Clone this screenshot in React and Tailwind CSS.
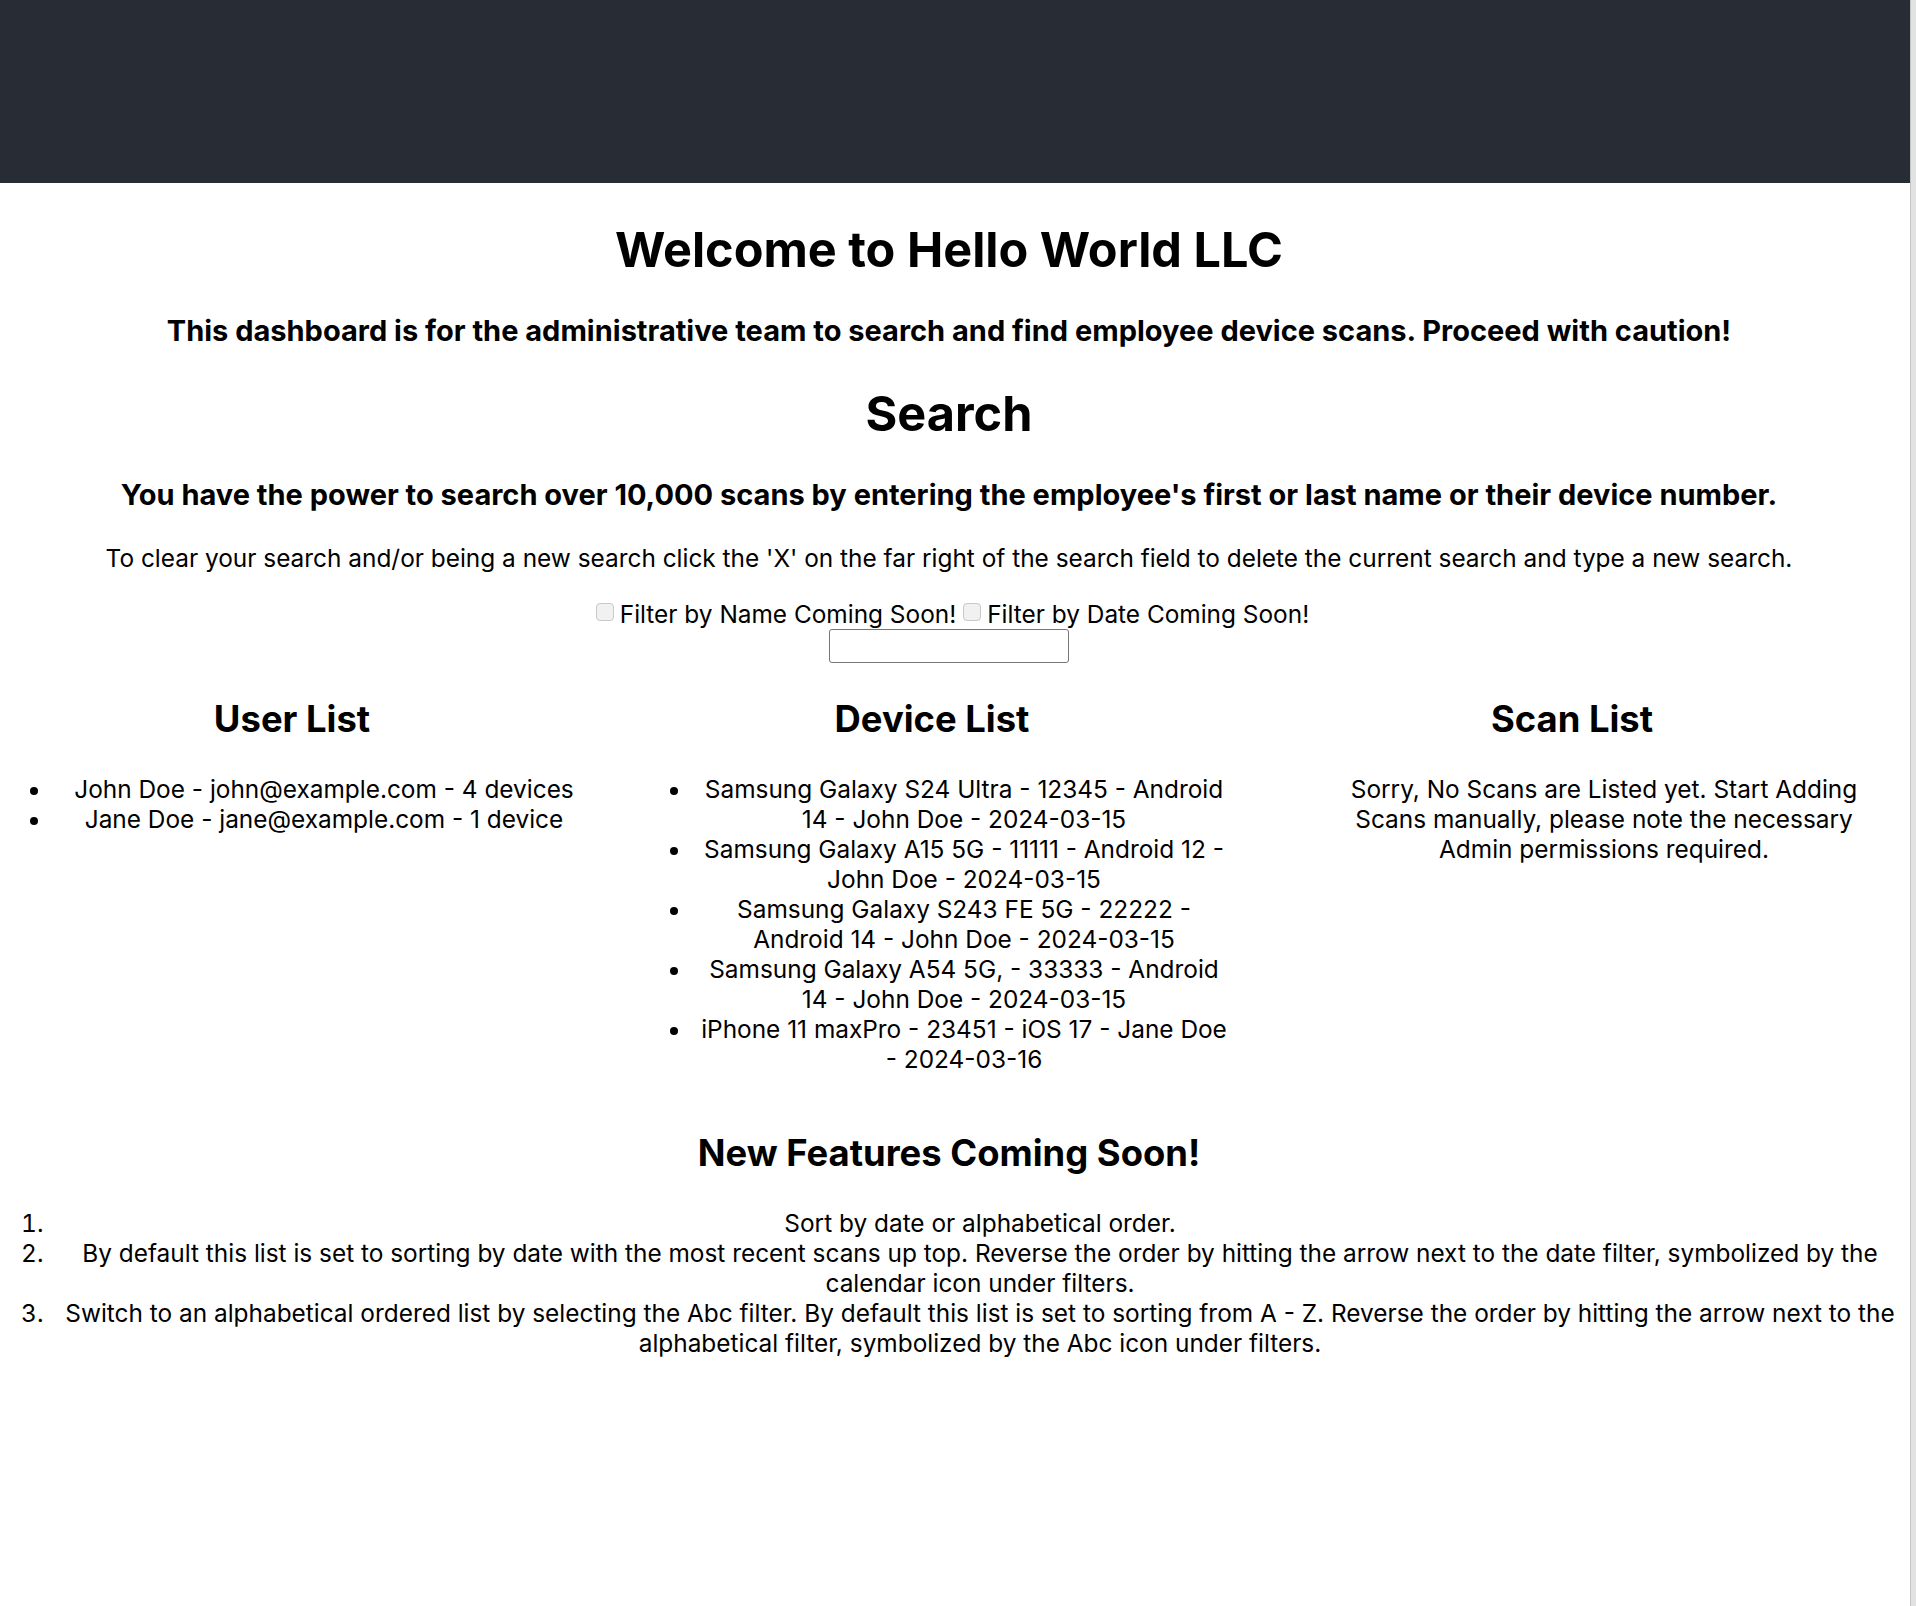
import React from "react";

const users = [
  "John Doe - john@example.com - 4 devices",
  "Jane Doe - jane@example.com - 1 device",
];

const devices = [
  "Samsung Galaxy S24 Ultra - 12345 - Android 14 - John Doe - 2024-03-15",
  "Samsung Galaxy A15 5G - 11111 - Android 12 - John Doe - 2024-03-15",
  "Samsung Galaxy S243 FE 5G - 22222 - Android 14 - John Doe - 2024-03-15",
  "Samsung Galaxy A54 5G, - 33333 - Android 14 - John Doe - 2024-03-15",
  "iPhone 11 maxPro - 23451 - iOS 17 - Jane Doe - 2024-03-16",
];

const features = [
  "Sort by date or alphabetical order.",
  "By default this list is set to sorting by date with the most recent scans up top. Reverse the order by hitting the arrow next to the date filter, symbolized by the calendar icon under filters.",
  "Switch to an alphabetical ordered list by selecting the Abc filter. By default this list is set to sorting from A - Z. Reverse the order by hitting the arrow next to the alphabetical filter, symbolized by the Abc icon under filters.",
];

function Checkbox() {
  return (
    <input
      type="checkbox"
      disabled
      className="appearance-none w-[18px] h-[18px] rounded-[4px] border border-[#c9c9c9] bg-[#f1f1f1] mb-[4px] shrink-0"
    />
  );
}

function Bullet({ children }) {
  return (
    <li className="relative">
      <span className="absolute -left-[28px] top-[13px] w-[8px] h-[8px] rounded-full bg-black" />
      {children}
    </li>
  );
}

export default function App() {
  return (
    <div className="flex min-h-[1606px] w-[1916px] bg-white text-black [font-family:Inter,sans-serif]">
      <div className="flex-1 flex flex-col text-center">
        <header className="h-[183px] bg-[#282c34]" />

        <div className="flex flex-col pr-[12px]">
          <h1 className="mt-[38px] text-[48.6px] leading-[58px] font-bold">
            Welcome to Hello World LLC
          </h1>
          <h3 className="mt-[34px] text-[29px] leading-[36px] font-bold">
            This dashboard is for the administrative team to search and find employee device scans. Proceed with caution!
          </h3>
          <h1 className="mt-[36px] text-[48.6px] leading-[58px] font-bold">Search</h1>
          <h3 className="mt-[34px] text-[29px] leading-[36px] font-bold">
            You have the power to search over 10,000 scans by entering the employee's first or last name or their device number.
          </h3>
          <p className="mt-[29.6px] text-[24.4px] leading-[30px]">
            To clear your search and/or being a new search click the 'X' on the far right of the search field to delete the current search and type a new search.
          </p>
        </div>

        <div className="mt-[26px] pr-[5px] flex justify-center items-center text-[24.4px] leading-[30px]">
          <Checkbox />
          <span className="ml-[6px]">Filter by Name Coming Soon!</span>
          <span className="ml-[7px] flex items-center">
            <Checkbox />
          </span>
          <span className="ml-[6px]">Filter by Date Coming Soon!</span>
        </div>
        <input
          type="text"
          className="self-center mr-[12px] w-[240px] h-[34px] border border-[#767676] rounded-[3px] bg-white"
        />

        <div className="mt-[34.8px] grid grid-cols-[590px_590px_590px] gap-x-[50px]">
          <div>
            <h2 className="pr-[6px] text-[36.4px] leading-[44px] font-bold">User List</h2>
            <ul className="mt-[32.3px] pl-[58px] list-none text-[24.4px] leading-[30px]">
              {users.map((u) => (
                <Bullet key={u}>{u}</Bullet>
              ))}
            </ul>
          </div>
          <div>
            <h2 className="pr-[6px] text-[36.4px] leading-[44px] font-bold">Device List</h2>
            <ul className="mt-[32.3px] pl-[58px] list-none text-[24.4px] leading-[30px]">
              {devices.map((d) => (
                <Bullet key={d}>{d}</Bullet>
              ))}
            </ul>
          </div>
          <div>
            <h2 className="pr-[6px] text-[36.4px] leading-[44px] font-bold">Scan List</h2>
            <p className="mt-[32.3px] pl-[58px] text-[24.4px] leading-[30px]">
              Sorry, No Scans are Listed yet. Start Adding Scans manually, please note the necessary Admin permissions required.
            </p>
          </div>
        </div>

        <h2 className="mt-[57.7px] mr-[12px] text-[36.4px] leading-[44px] font-bold">New Features Coming Soon!</h2>
        <ol className="mt-[32.3px] pl-[50px] list-decimal list-outside text-[24.4px] leading-[30px]">
          {features.map((f) => (
            <li key={f}>{f}</li>
          ))}
        </ol>
      </div>
      <div className="w-[6px] border-l border-[#c4c4c4] bg-[#e2e2e2]" />
    </div>
  );
}
